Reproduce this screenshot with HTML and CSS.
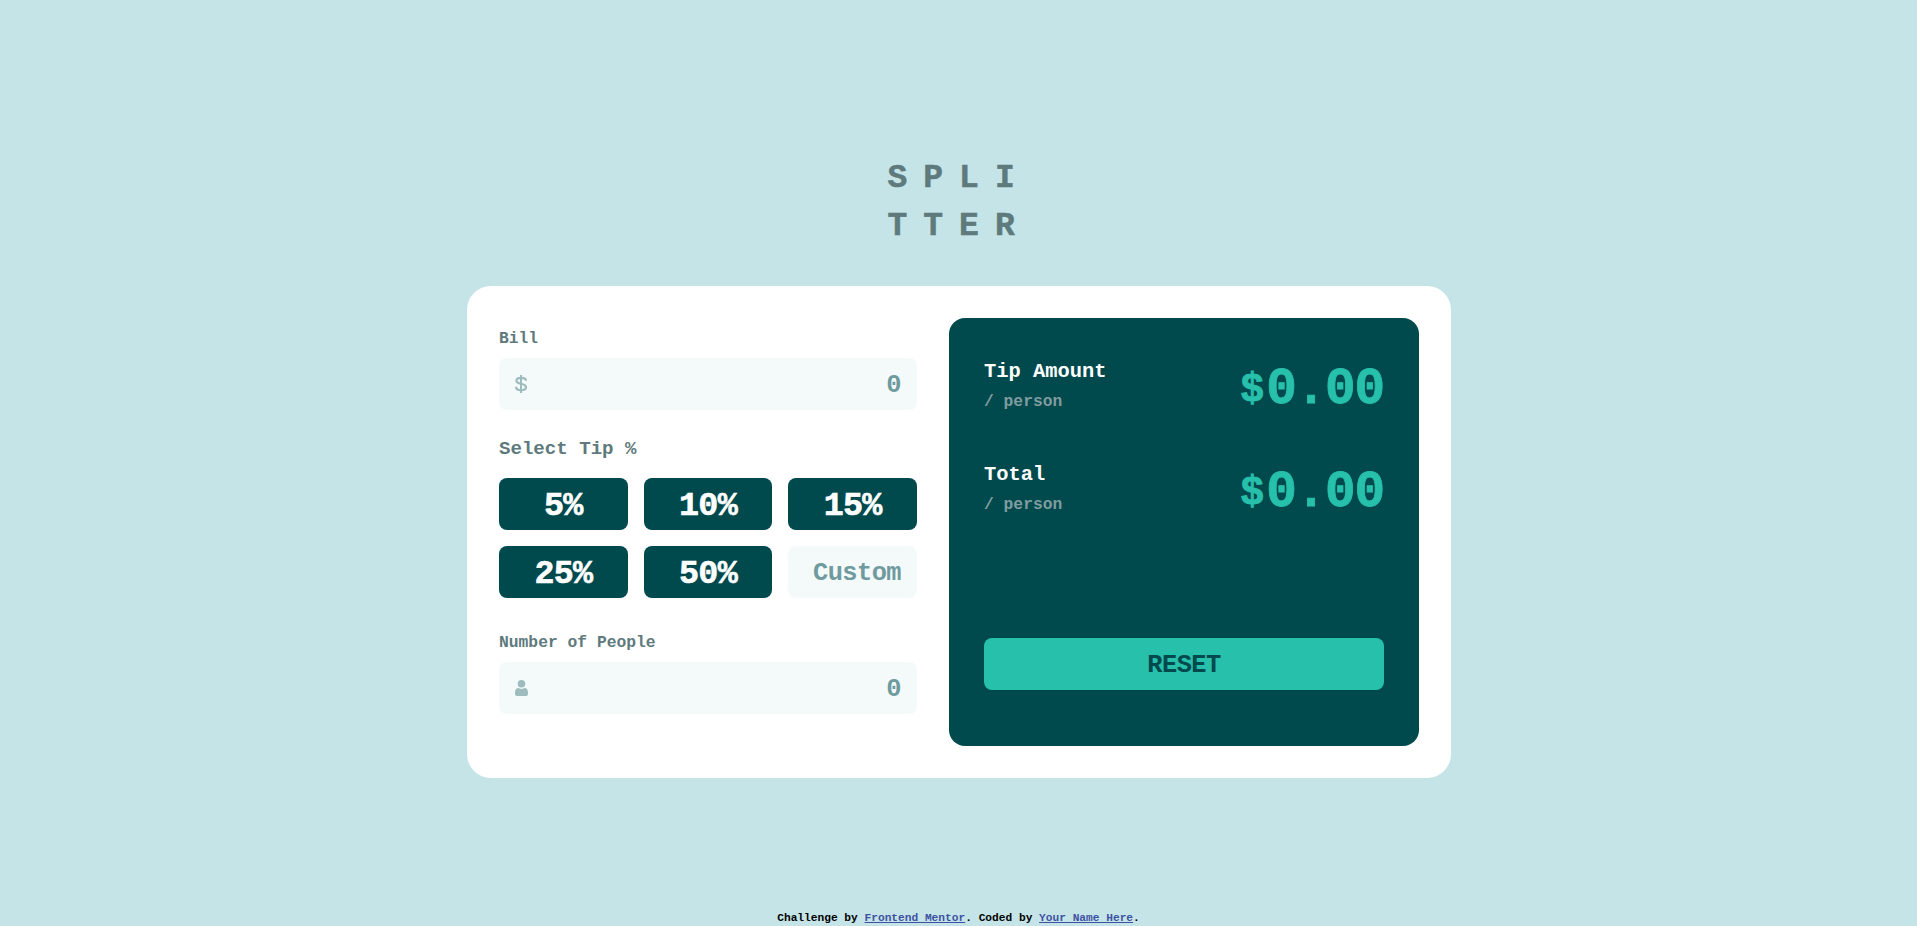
FILE: index.html
```html
<!DOCTYPE html>
<html lang="en">
<head>
  <meta charset="utf-8">
  <title>Tip calculator app</title>
  <link rel="stylesheet" href="styles.css">
</head>
<body>
  <h1 class="title">SPLI<br>TTER</h1>
  <main class="card">
    <form class="form">
      <label class="label" for="bill">Bill</label>
      <div class="field">
        <svg class="icon" width="12" height="18" viewBox="0 0 12 18" fill="none" stroke="#9ebbbd"><path stroke-width="2.2" d="M11 5.8C11 3.8 9 2.8 6.2 2.8C3.2 2.8 1.4 3.8 1.4 5.7C1.4 9.8 11 7.6 11 12.1C11 14.1 9 15.2 6.2 15.2C3 15.2 1 14 1 11.7"/><path stroke-width="2" d="M6 0V18"/></svg>
        <input class="input" id="bill" type="text" placeholder="0">
      </div>
      <p class="label label-tip">Select Tip %</p>
      <div class="tips">
        <button class="tip" type="button">5%</button>
        <button class="tip" type="button">10%</button>
        <button class="tip" type="button">15%</button>
        <button class="tip" type="button">25%</button>
        <button class="tip" type="button">50%</button>
        <input class="input custom" type="text" placeholder="Custom" aria-label="Custom tip">
      </div>
      <label class="label" for="people">Number of People</label>
      <div class="field">
        <svg class="icon" width="13" height="16" viewBox="0 0 13 16" fill="#9ebbbd"><circle cx="6.5" cy="3.8" r="3.8"/><path d="M3.2 7.8C4 8.5 5.2 9 6.5 9S9 8.5 9.8 7.8C12 8.4 13 10.4 13 12.6V14Q13 16 11 16H2Q0 16 0 14V12.6C0 10.4 1 8.4 3.2 7.8Z"/></svg>
        <input class="input" id="people" type="text" placeholder="0">
      </div>
    </form>
    <section class="result">
      <div class="row">
        <div>
          <p class="name">Tip Amount</p>
          <p class="unit">/ person</p>
        </div>
        <p class="amount"><span class="currency">$</span>0.00</p>
      </div>
      <div class="row">
        <div>
          <p class="name">Total</p>
          <p class="unit">/ person</p>
        </div>
        <p class="amount"><span class="currency">$</span>0.00</p>
      </div>
      <button class="reset" type="button">RESET</button>
    </section>
  </main>
  <footer class="attribution">Challenge by <a href="#">Frontend Mentor</a>. Coded by <a href="#">Your Name Here</a>.</footer>
</body>
</html>
```
FILE: styles.css
```css
* {
  box-sizing: border-box;
  margin: 0;
  letter-spacing: -0.0226em;
}

body {
  display: flex;
  flex-direction: column;
  align-items: center;
  height: 926px;
  padding-top: 155px;
  overflow: hidden;
  background: #c5e4e7;
  font-family: "Liberation Mono", monospace;
  font-weight: 700;
}

button,
input {
  font: inherit;
  border: 0;
  border-radius: 8px;
}

.title {
  width: 144px;
  margin: 0 0 35px 2px;
  font-size: 33px;
  line-height: 48px;
  letter-spacing: 16px;
  color: #5e7a7d;
  -webkit-text-stroke: 0.5px;
}

.card {
  display: grid;
  grid-template-columns: 418px 470px;
  gap: 32px;
  height: 492px;
  margin-left: 1px;
  padding: 32px;
  border-radius: 24px;
  background: #fff;
}

.form {
  padding-top: 9px;
}

.label {
  display: block;
  margin-bottom: 7px;
  font-size: 16.32px;
  line-height: 24px;
  letter-spacing: 0;
  color: #5e7a7d;
}

.label-tip {
  margin: 25px 0 15px;
  font-size: 19.1px;
  line-height: 28px;
}

.field {
  display: flex;
  align-items: center;
  height: 52px;
  padding-left: 16px;
  border-radius: 8px;
  background: #f4fafa;
}

.icon {
  flex: none;
}

.input {
  flex: 1;
  min-width: 0;
  width: 100%;
  height: 52px;
  padding: 3px 16px 0 0;
  background: #f4fafa;
  font-size: 25.4px;
  text-align: right;
  outline: 0;
}

.input::placeholder {
  color: #6f9b9f;
}

.tips {
  display: grid;
  grid-template-columns: repeat(3, 1fr);
  gap: 16px;
  margin-bottom: 33px;
}

.tip {
  height: 52px;
  padding: 4px 0 0;
  background: #00494d;
  color: #fff;
  font-size: 33.4px;
  -webkit-text-stroke: 0.6px;
}

.result {
  display: flex;
  flex-direction: column;
  padding: 39px 35px 56px;
  border-radius: 16px;
  background: #00494d;
}

.row {
  display: flex;
  justify-content: space-between;
  margin-bottom: 45px;
}

.name {
  margin-bottom: 3px;
  font-size: 20.4px;
  line-height: 30px;
  letter-spacing: 0;
  color: #fff;
}

.unit {
  padding-bottom: 1px;
  font-size: 16.32px;
  line-height: 24px;
  letter-spacing: 0;
  color: #7f9c9f;
}

.amount {
  padding-top: 9px;
  font-size: 51px;
  line-height: 48px;
  color: #26c0ab;
  -webkit-text-stroke: 0.8px;
}

.currency {
  font-size: 40px;
  letter-spacing: 2px;
  vertical-align: 2px;
  line-height: 1;
}

.reset {
  height: 52px;
  margin-top: auto;
  padding: 3px 0 0;
  background: #26c0ab;
  color: #00494d;
  font-size: 25.4px;
}

.attribution {
  margin-top: 132px;
  font-size: 11.2px;
  line-height: 16px;
  letter-spacing: 0;
  color: #000;
}

.attribution a {
  color: #3e52a3;
  letter-spacing: 0;
}
```
